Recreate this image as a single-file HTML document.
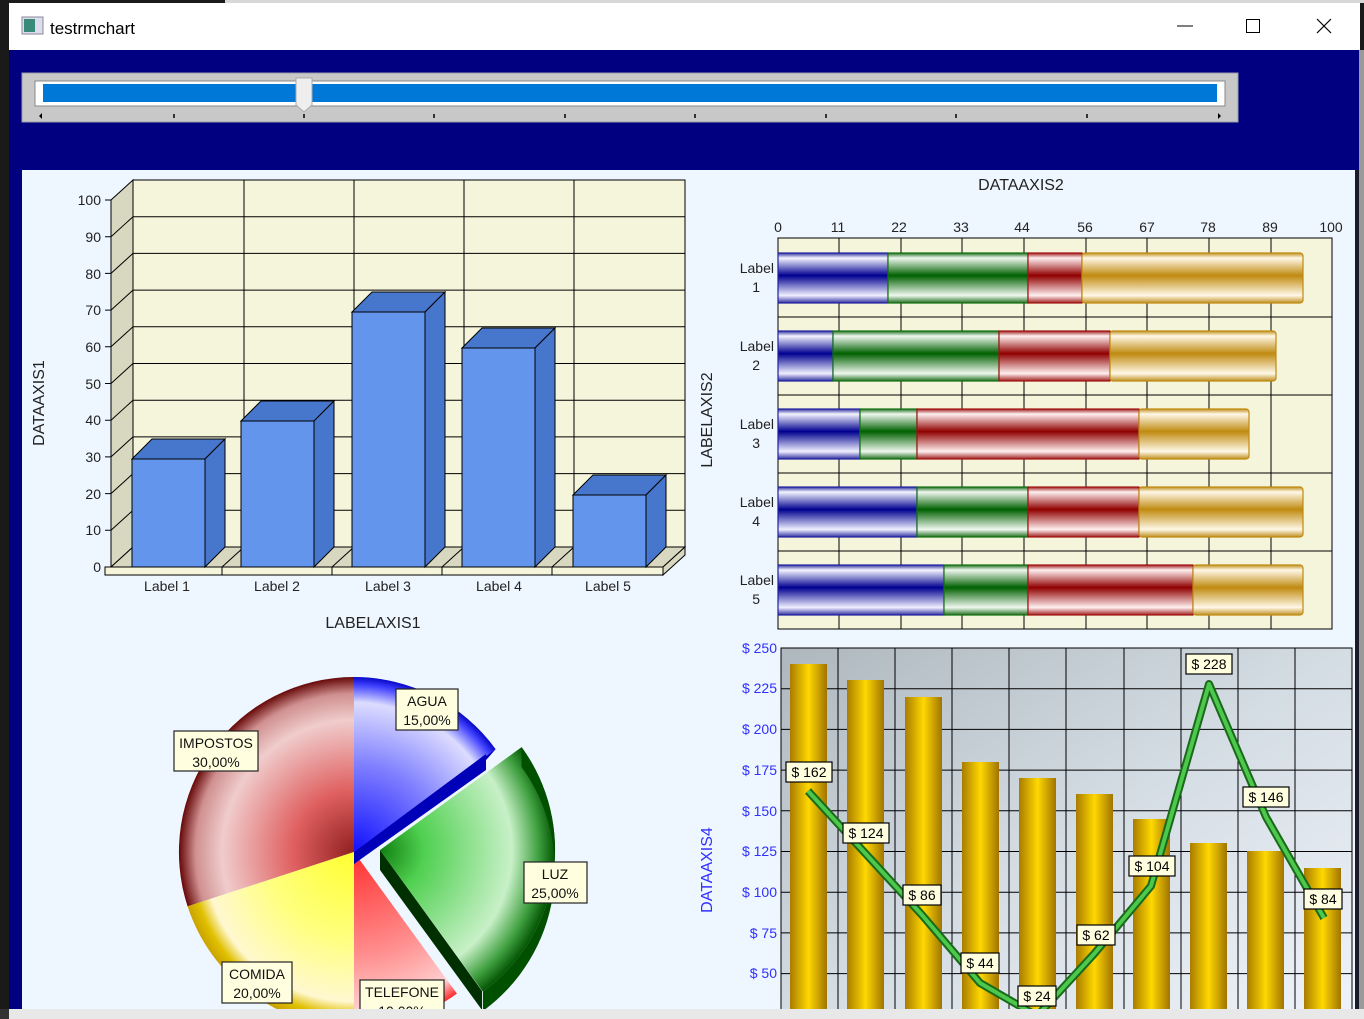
<!DOCTYPE html>
<html><head><meta charset="utf-8"><style>
html,body{margin:0;padding:0;width:1364px;height:1019px;overflow:hidden;background:#fff}
svg{display:block;font-family:"Liberation Sans",sans-serif}
</style></head><body>
<svg width="1364" height="1019" viewBox="0 0 1364 1019" xmlns="http://www.w3.org/2000/svg">
<defs>
<linearGradient id="gB" x1="0" y1="0" x2="0" y2="1"><stop offset="0" stop-color="#3030a0"/><stop offset=".1" stop-color="#f4f4ff"/><stop offset=".45" stop-color="#000090"/><stop offset=".85" stop-color="#f0f0ff"/><stop offset="1" stop-color="#3030a0"/></linearGradient>
<linearGradient id="gG" x1="0" y1="0" x2="0" y2="1"><stop offset="0" stop-color="#207020"/><stop offset=".1" stop-color="#f0f8f0"/><stop offset=".45" stop-color="#006000"/><stop offset=".85" stop-color="#f0f8f0"/><stop offset="1" stop-color="#207020"/></linearGradient>
<linearGradient id="gR" x1="0" y1="0" x2="0" y2="1"><stop offset="0" stop-color="#a02020"/><stop offset=".1" stop-color="#fff0f0"/><stop offset=".45" stop-color="#900000"/><stop offset=".85" stop-color="#fff0f0"/><stop offset="1" stop-color="#a02020"/></linearGradient>
<linearGradient id="gY" x1="0" y1="0" x2="0" y2="1"><stop offset="0" stop-color="#c09020"/><stop offset=".1" stop-color="#fff8e8"/><stop offset=".45" stop-color="#c08a10"/><stop offset=".85" stop-color="#fff8e8"/><stop offset="1" stop-color="#c09020"/></linearGradient>
<linearGradient id="gold" x1="0" y1="0" x2="1" y2="0"><stop offset="0" stop-color="#a87c00"/><stop offset=".5" stop-color="#ffd800"/><stop offset="1" stop-color="#a07400"/></linearGradient>
<linearGradient id="bg4" x1="0" y1="0" x2="1" y2="1"><stop offset="0" stop-color="#aeb6be"/><stop offset=".5" stop-color="#d4dce4"/><stop offset="1" stop-color="#f0f4fa"/></linearGradient>
<radialGradient id="pR" cx="354" cy="852" r="176" gradientUnits="userSpaceOnUse"><stop offset="0" stop-color="#902020"/><stop offset=".35" stop-color="#e06060"/><stop offset=".75" stop-color="#f0cccc"/><stop offset=".9" stop-color="#d09090"/><stop offset="1" stop-color="#600000"/></radialGradient>
<radialGradient id="pB" cx="354" cy="852" r="176" gradientUnits="userSpaceOnUse"><stop offset="0" stop-color="#1010ff"/><stop offset=".5" stop-color="#8080ff"/><stop offset=".85" stop-color="#dcdcff"/><stop offset=".95" stop-color="#4040ff"/><stop offset="1" stop-color="#0000c0"/></radialGradient>
<radialGradient id="pG" cx="380" cy="850" r="176" gradientUnits="userSpaceOnUse"><stop offset="0" stop-color="#108010"/><stop offset=".25" stop-color="#50d050"/><stop offset=".75" stop-color="#c8f0c8"/><stop offset=".9" stop-color="#40a040"/><stop offset="1" stop-color="#005000"/></radialGradient>
<radialGradient id="pY" cx="354" cy="852" r="176" gradientUnits="userSpaceOnUse"><stop offset="0" stop-color="#ffff30"/><stop offset=".5" stop-color="#ffff80"/><stop offset=".85" stop-color="#fff8d0"/><stop offset=".93" stop-color="#e0c000"/><stop offset="1" stop-color="#c8a000"/></radialGradient>
<radialGradient id="pT" cx="354" cy="852" r="176" gradientUnits="userSpaceOnUse"><stop offset="0" stop-color="#ff3030"/><stop offset=".6" stop-color="#ff9090"/><stop offset=".9" stop-color="#ffd0d0"/><stop offset="1" stop-color="#ff2020"/></radialGradient>
<clipPath id="panel"><rect x="22" y="170" width="1336" height="839"/></clipPath>
</defs>

<!-- frame -->
<rect x="0" y="0" width="1364" height="1019" fill="#1a1a1a"/>
<rect x="225" y="0" width="1139" height="3" fill="#d8d8d8"/>
<rect x="9" y="3" width="1351" height="47" fill="#fff"/>
<rect x="22" y="17" width="21" height="17" fill="#dde" stroke="#889" />
<rect x="24" y="19" width="11" height="13" fill="#3a8a7a"/>
<text x="50" y="34" font-size="17" fill="#000">testrmchart</text>
<line x1="1177" y1="26" x2="1193" y2="26" stroke="#000" stroke-width="1"/>
<rect x="1246.5" y="19.5" width="13" height="13" fill="none" stroke="#000"/>
<path d="M1317 19 L1331 33 M1331 19 L1317 33" stroke="#000" stroke-width="1.2"/>
<rect x="9" y="50" width="1351" height="959" fill="#000080"/>
<rect x="1359" y="50" width="5" height="969" fill="#9a9a9a"/>
<rect x="0" y="1009" width="1364" height="10" fill="#e8e8e8"/>
<rect x="0" y="1009" width="9" height="10" fill="#333"/>

<!-- slider -->
<rect x="22" y="73" width="1216" height="49" fill="#c8c8c8" stroke="#9a9aa8"/>
<rect x="35" y="81" width="1190" height="25" fill="#fff" stroke="#888"/>
<rect x="43" y="84" width="1174" height="18" fill="#0078d7"/>
<path d="M296 78 h16 v27 l-8 7 l-8 -7z" fill="#eee" stroke="#aaa"/>
<g stroke="#000" stroke-width="1.5">
<line x1="174" y1="114" x2="174" y2="118"/><line x1="304" y1="114" x2="304" y2="118"/><line x1="434" y1="114" x2="434" y2="118"/><line x1="565" y1="114" x2="565" y2="118"/><line x1="695" y1="114" x2="695" y2="118"/><line x1="826" y1="114" x2="826" y2="118"/><line x1="956" y1="114" x2="956" y2="118"/><line x1="1087" y1="114" x2="1087" y2="118"/></g>
<path d="M39 116 l3 -3 v6z M1221 116 l-3 -3 v6z" fill="#000"/>

<!-- panel -->
<rect x="22" y="170" width="1336" height="839" fill="#eef6ff"/>
<g clip-path="url(#panel)">

<!-- left 3D bar chart -->
<rect x="133" y="180" width="552" height="367" fill="#f5f5dc" stroke="#000"/>
<polygon points="111,200 133,180 133,547 111,567" fill="#d8d8c0" stroke="#000"/>
<polygon points="111,567 133,547 685,547 663,567" fill="#d8d8c0" stroke="#000"/>
<g stroke="#000" stroke-width="1" fill="none">
<path d="M133 216.7H685M133 253.4H685M133 290.1H685M133 326.8H685M133 363.5H685M133 400.2H685M133 436.9H685M133 473.6H685M133 510.3H685"/>
<path d="M244 180V547M354 180V547M464 180V547M574 180V547"/>
<path d="M111 236.7L133 216.7M111 273.4L133 253.4M111 310.1L133 290.1M111 346.8L133 326.8M111 383.5L133 363.5M111 420.2L133 400.2M111 456.9L133 436.9M111 493.6L133 473.6M111 530.3L133 510.3"/>
<path d="M222 567L244 547M332 567L354 547M442 567L464 547M552 567L574 547"/>
<path d="M105 200H111M105 236.7H111M105 273.4H111M105 310.1H111M105 346.8H111M105 383.5H111M105 420.2H111M105 456.9H111M105 493.6H111M105 530.3H111M105 567H111"/>
</g>
<rect x="105" y="567" width="558" height="8" fill="#f5f5dc" stroke="#000"/>
<path d="M222 567V575M332 567V575M442 567V575M552 567V575" stroke="#000"/>
<polygon points="663,567 685,547 685,555 663,575" fill="#d8d8c0" stroke="#000"/>
<g stroke="#000" stroke-width="1">
<polygon points="132,459 152,439 225,439 205,459" fill="#4677cc"/><polygon points="205,459 225,439 225,547 205,567" fill="#4677cc"/><rect x="132" y="459" width="73" height="108" fill="#6495ed"/>
<polygon points="241,421 261,401 334,401 314,421" fill="#4677cc"/><polygon points="314,421 334,401 334,547 314,567" fill="#4677cc"/><rect x="241" y="421" width="73" height="146" fill="#6495ed"/>
<polygon points="352,312 372,292 445,292 425,312" fill="#4677cc"/><polygon points="425,312 445,292 445,547 425,567" fill="#4677cc"/><rect x="352" y="312" width="73" height="255" fill="#6495ed"/>
<polygon points="462,348 482,328 555,328 535,348" fill="#4677cc"/><polygon points="535,348 555,328 555,547 535,567" fill="#4677cc"/><rect x="462" y="348" width="73" height="219" fill="#6495ed"/>
<polygon points="573,495 593,475 666,475 646,495" fill="#4677cc"/><polygon points="646,495 666,475 666,547 646,567" fill="#4677cc"/><rect x="573" y="495" width="73" height="72" fill="#6495ed"/>
</g>
<g font-size="14" fill="#222" text-anchor="end">
<text x="101" y="205">100</text><text x="101" y="242">90</text><text x="101" y="279">80</text><text x="101" y="315">70</text><text x="101" y="352">60</text><text x="101" y="389">50</text><text x="101" y="425">40</text><text x="101" y="462">30</text><text x="101" y="499">20</text><text x="101" y="535">10</text><text x="101" y="572">0</text>
</g>
<g font-size="14" fill="#222" text-anchor="middle">
<text x="167" y="591">Label 1</text><text x="277" y="591">Label 2</text><text x="388" y="591">Label 3</text><text x="499" y="591">Label 4</text><text x="608" y="591">Label 5</text>
</g>
<text x="373" y="628" font-size="16" fill="#222" text-anchor="middle">LABELAXIS1</text>
<text transform="translate(44,403) rotate(-90)" font-size="16" fill="#222" text-anchor="middle">DATAAXIS1</text>

<!-- right top horizontal bars -->
<text x="1021" y="190" font-size="16" fill="#222" text-anchor="middle">DATAAXIS2</text>
<g font-size="14" fill="#222" text-anchor="middle">
<text x="778" y="232">0</text><text x="838" y="232">11</text><text x="899" y="232">22</text><text x="961" y="232">33</text><text x="1022" y="232">44</text><text x="1085" y="232">56</text><text x="1147" y="232">67</text><text x="1208" y="232">78</text><text x="1270" y="232">89</text><text x="1331" y="232">100</text>
</g>
<rect x="778" y="238" width="554" height="391" fill="#f5f5dc" stroke="#000"/>
<g stroke="#000" fill="none">
<path d="M839 238V629M901 238V629M962 238V629M1024 238V629M1086 238V629M1147 238V629M1209 238V629M1271 238V629"/>
<path d="M778 317H1332M778 395H1332M778 473H1332M778 551H1332"/>
</g>
<g stroke-width="1.2">
<rect x="778" y="253" width="110" height="50" fill="url(#gB)" stroke="#2020a0"/><rect x="888" y="253" width="140" height="50" fill="url(#gG)" stroke="#107010"/><rect x="1028" y="253" width="54" height="50" fill="url(#gR)" stroke="#a01010"/><rect x="1082" y="253" width="221" height="50" rx="3" fill="url(#gY)" stroke="#c08a10"/>
<rect x="778" y="331" width="55" height="50" fill="url(#gB)" stroke="#2020a0"/><rect x="833" y="331" width="166" height="50" fill="url(#gG)" stroke="#107010"/><rect x="999" y="331" width="111" height="50" fill="url(#gR)" stroke="#a01010"/><rect x="1110" y="331" width="166" height="50" rx="3" fill="url(#gY)" stroke="#c08a10"/>
<rect x="778" y="409" width="82" height="50" fill="url(#gB)" stroke="#2020a0"/><rect x="860" y="409" width="57" height="50" fill="url(#gG)" stroke="#107010"/><rect x="917" y="409" width="222" height="50" fill="url(#gR)" stroke="#a01010"/><rect x="1139" y="409" width="110" height="50" rx="3" fill="url(#gY)" stroke="#c08a10"/>
<rect x="778" y="487" width="139" height="50" fill="url(#gB)" stroke="#2020a0"/><rect x="917" y="487" width="111" height="50" fill="url(#gG)" stroke="#107010"/><rect x="1028" y="487" width="111" height="50" fill="url(#gR)" stroke="#a01010"/><rect x="1139" y="487" width="164" height="50" rx="3" fill="url(#gY)" stroke="#c08a10"/>
<rect x="778" y="565" width="166" height="50" fill="url(#gB)" stroke="#2020a0"/><rect x="944" y="565" width="84" height="50" fill="url(#gG)" stroke="#107010"/><rect x="1028" y="565" width="165" height="50" fill="url(#gR)" stroke="#a01010"/><rect x="1193" y="565" width="110" height="50" rx="3" fill="url(#gY)" stroke="#c08a10"/>
</g>
<g font-size="14" fill="#222" text-anchor="end">
<text x="774" y="273">Label</text><text x="760" y="292">1</text>
<text x="774" y="351">Label</text><text x="760" y="370">2</text>
<text x="774" y="429">Label</text><text x="760" y="448">3</text>
<text x="774" y="507">Label</text><text x="760" y="526">4</text>
<text x="774" y="585">Label</text><text x="760" y="604">5</text>
</g>
<text transform="translate(712,420) rotate(-90)" font-size="16" fill="#222" text-anchor="middle">LABELAXIS2</text>

<!-- bottom right chart -->
<rect x="781" y="648" width="571" height="380" fill="url(#bg4)" stroke="#000"/>
<g stroke="#000" fill="none">
<path d="M838 648V1020M895 648V1020M952 648V1020M1009 648V1020M1066 648V1020M1124 648V1020M1181 648V1020M1238 648V1020M1295 648V1020"/>
<path d="M781 688.7H1352M781 729.4H1352M781 770.1H1352M781 810.8H1352M781 851.5H1352M781 892.2H1352M781 932.9H1352M781 973.6H1352"/>
</g>
<g fill="url(#gold)">
<rect x="790" y="664" width="37" height="360"/><rect x="847" y="680" width="37" height="340"/><rect x="905" y="697" width="37" height="330"/><rect x="962" y="762" width="37" height="260"/><rect x="1019" y="778" width="37" height="240"/><rect x="1076" y="794" width="37" height="230"/><rect x="1133" y="819" width="37" height="200"/><rect x="1190" y="843" width="37" height="180"/><rect x="1247" y="851" width="37" height="170"/><rect x="1304" y="868" width="37" height="150"/>
</g>
<polyline points="808,791 865,853 922,915 980,983 1037,1016 1094,954 1151,886 1209,684 1266,817 1324,918" fill="none" stroke="#1a6a1a" stroke-width="8" stroke-linejoin="round"/>
<polyline points="808,791 865,853 922,915 980,983 1037,1016 1094,954 1151,886 1209,684 1266,817 1324,918" fill="none" stroke="#4cc84c" stroke-width="4" stroke-linejoin="round"/>
<g font-size="14" fill="#000" text-anchor="middle">
<g fill="#ffffe0" stroke="#000" stroke-width="1.2">
<rect x="786" y="762" width="46" height="20"/><rect x="843" y="823" width="46" height="20"/><rect x="903" y="885" width="38" height="20"/><rect x="961" y="953" width="38" height="20"/><rect x="1018" y="986" width="38" height="20"/><rect x="1077" y="925" width="38" height="20"/><rect x="1129" y="856" width="46" height="20"/><rect x="1186" y="654" width="46" height="20"/><rect x="1243" y="787" width="46" height="20"/><rect x="1304" y="889" width="38" height="20"/>
</g>
<text x="809" y="777">$ 162</text><text x="866" y="838">$ 124</text><text x="922" y="900">$ 86</text><text x="980" y="968">$ 44</text><text x="1037" y="1001">$ 24</text><text x="1096" y="940">$ 62</text><text x="1152" y="871">$ 104</text><text x="1209" y="669">$ 228</text><text x="1266" y="802">$ 146</text><text x="1323" y="904">$ 84</text>
</g>
<g font-size="14" fill="#3030ff" text-anchor="end">
<text x="777" y="653">$ 250</text><text x="777" y="693">$ 225</text><text x="777" y="734">$ 200</text><text x="777" y="775">$ 175</text><text x="777" y="816">$ 150</text><text x="777" y="856">$ 125</text><text x="777" y="897">$ 100</text><text x="777" y="938">$ 75</text><text x="777" y="978">$ 50</text>
</g>
<text transform="translate(712,870) rotate(-90)" font-size="16" fill="#3030ff" text-anchor="middle">DATAAXIS4</text>

<!-- pie -->
<!-- IMPOSTOS 162..270 -->
<path d="M354 852 L187.6 906.4 A175 175 0 0 1 354 677 Z" fill="url(#pR)"/>
<!-- COMIDA 90..162 -->
<path d="M354 852 L354 1027 A175 175 0 0 1 187.6 906.4 Z" fill="url(#pY)"/>
<!-- TELEFONE 54..90 -->
<path d="M354 852 L456.9 993.6 A175 175 0 0 1 354 1027 Z" fill="url(#pT)"/>
<!-- AGUA depth -->
<path d="M354 852 L495.6 749.1 L486 760 L354 864 Z" fill="#0000a0"/>
<path d="M354 852 L354 864 L486 760 L495.6 749.1 Z" fill="#0000b0"/>
<path d="M354 852 L354 677 A175 175 0 0 1 495.6 749.1 Z" fill="url(#pB)"/>
<path d="M354 864 L354 852 L486 754 L486 770 Z" fill="#0000b8"/>
<!-- LUZ exploded, depth -->
<path d="M380 850 L380 870 L482 1010 L482 991 Z" fill="#003000"/>
<path d="M380 850 L521.6 747.1 A175 175 0 0 1 482.9 991.6 Z" fill="url(#pG)"/>
<path d="M482.9 991.6 A175 175 0 0 0 521.6 747.1 L521.6 767 A175 175 0 0 1 482.9 1011 Z" fill="#005000"/>
<g font-size="14" fill="#111" text-anchor="middle">
<g fill="#ffffe0" stroke="#222" stroke-width="1.2">
<rect x="174" y="731" width="84" height="40"/><rect x="396" y="689" width="62" height="41"/><rect x="524" y="862" width="63" height="41"/><rect x="222" y="962" width="70" height="41"/><rect x="360" y="980" width="84" height="41"/>
</g>
<text x="216" y="748">IMPOSTOS</text><text x="216" y="767">30,00%</text>
<text x="427" y="706">AGUA</text><text x="427" y="725">15,00%</text>
<text x="555" y="879">LUZ</text><text x="555" y="898">25,00%</text>
<text x="257" y="979">COMIDA</text><text x="257" y="998">20,00%</text>
<text x="402" y="997">TELEFONE</text><text x="402" y="1016">10,00%</text>
</g>
</g>
<rect x="1355" y="170" width="4" height="839" fill="#1a1a2a"/>
</svg>
</body></html>
